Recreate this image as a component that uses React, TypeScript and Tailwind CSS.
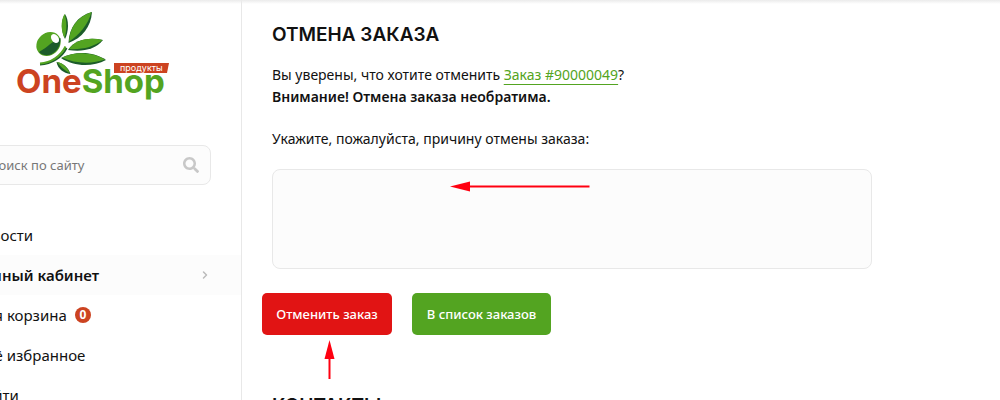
import { useState } from "react";
import { FaSearch } from "react-icons/fa";
import { ChevronRight } from "lucide-react";

type NavItem = { label: string; active?: boolean; count?: number };

const navItems: NavItem[] = [
  { label: "Новости" },
  { label: "Личный кабинет", active: true },
  { label: "Моя корзина", count: 0 },
  { label: "Моё избранное" },
  { label: "Выйти" },
];

function Logo() {
  return (
    <svg width="156" height="90" viewBox="15 11 156 90" role="img" aria-label="OneShop продукты">
      {/* Leaves: dark edge first, light blade on top */}
      <g fill="#1c5c2a">
        <path d="M65 14C60.500 21 61 31 65 39C69 31 69 20 65 14Z" />
        <path d="M92 12C77 16 69 28 68.500 43C82 38 91 27 92 12Z" />
        <path d="M103 40C90 37 75 39 68 50C82 52 95 50 103 40Z" />
        <path d="M106 60C93 51 75 51 61 58C74 67 93 67 106 60Z" />
        <path d="M56.500 62C58 69 63 73 70.500 74C68 67 63 63 56.500 62Z" />
      </g>
      <g fill="#53a421">
        <path d="M64.500 14C60.500 21 61 31 64.500 38C67 30 67 21 64.500 14Z" />
        <path d="M91.500 12C77 17 69.500 28 69 41.500C79 35 88 25 91.500 12Z" />
        <path d="M102.500 40C90 37 76 39 69 49C81 50 94 47 102.500 40Z" />
        <path d="M105 59.500C92 51.500 75 51.500 62 57.500C75 64 93 64 105 59.500Z" />
        <path d="M57 62C60 66 64 70 70 73.500C67 67 63 63 57 62Z" />
      </g>
      {/* Twig */}
      <g fill="none">
        <path d="M40 64.500C52 64 62 57 66.500 48" stroke="#1c5c2a" strokeWidth="2" />
        <path d="M40 63.500C51 63 61 56 65.500 46.500" stroke="#53a421" strokeWidth="2" />
      </g>
      {/* Olive */}
      <ellipse cx="48.500" cy="44" rx="13" ry="11" transform="rotate(-42 48.500 44)" fill="#53a421" />
      <path d="M39 52C48 47 52 41 60.500 38C61 45 57 52 51 54.500C47 56 42 55.500 39 52Z" fill="#1c5c2a" />
      <ellipse
        cx="55"
        cy="38.500"
        rx="3.500"
        ry="5"
        transform="rotate(-35 55 38.500)"
        fill="#fff"
      />
      <text x="16" y="93" className="font-['Inter',sans-serif] text-[33px] font-bold">
        <tspan fill="#cc4321">One</tspan>
        <tspan fill="#53a421">Shop</tspan>
      </text>
      <path d="M114 63H169L167 73H114Z" fill="#cc4321" />
      <text x="120" y="71" fill="#fff" className="font-['Inter',sans-serif] text-[9px]">
        продукты
      </text>
    </svg>
  );
}

function Sidebar() {
  return (
    <aside className="w-[242px] shrink-0 overflow-hidden border-r border-[#e8e8e8]">
      <div className="pl-[15px] pt-[11px]">
        <Logo />
      </div>

      {/* The panel starts beyond the left edge of the window */}
      <div className="-ml-8">
        <form className="relative mr-[30px] mt-11" onSubmit={(e) => e.preventDefault()}>
          <input
            type="text"
            aria-label="Поиск по сайту"
            placeholder="Поиск по сайту"
            className="block h-10 w-full rounded-lg border border-[#e8e8e8] bg-[#fcfcfc] pl-5 pr-10 text-[13px] placeholder:text-[#777]"
          />
          <button
            type="submit"
            aria-label="Найти"
            className="absolute inset-y-0 right-3 flex items-center text-[#c8c8c8]"
          >
            <FaSearch size={16} />
          </button>
        </form>

        <nav className="mt-[30px]">
          {navItems.map((item) => (
            <a
              key={item.label}
              href="#"
              className={
                item.active
                  ? "flex h-10 items-center bg-[#fcfcfc] pl-1 pr-[30px] text-[15px] font-semibold"
                  : "flex h-10 items-center pl-1 pr-[30px] text-[15px]"
              }
            >
              {item.label}
              {item.count !== undefined && (
                <span className="ml-2 flex size-4 items-center justify-center rounded-full bg-[#cc4321] text-[12px] font-bold text-white">
                  {item.count}
                </span>
              )}
              {item.active && (
                <ChevronRight size={12} strokeWidth={3} className="ml-auto text-[#bbb]" />
              )}
            </a>
          ))}
        </nav>
      </div>
    </aside>
  );
}

export default function App() {
  const [reason, setReason] = useState("");

  return (
    <div className="relative flex h-screen overflow-hidden bg-white font-['Noto_Sans',sans-serif] text-[#111]">
      <div className="absolute inset-x-0 top-0 h-1 bg-linear-to-b from-[#ebebeb] to-transparent" />
      <Sidebar />

      <main className="min-w-0 flex-1 px-[30px] pt-[23px]">
        <h1 className="font-['Inter',sans-serif] text-[19px] font-semibold leading-6">ОТМЕНА ЗАКАЗА</h1>

        <p className="mt-[17px] text-[14px] leading-[22px]">
          Вы уверены, что хотите отменить{" "}
          <a href="#" className="text-[#53a421] underline underline-offset-4">
            Заказ #90000049
          </a>
          ?
          <br />
          <b className="font-semibold">Внимание! Отмена заказа необратима.</b>
        </p>

        <form onSubmit={(e) => e.preventDefault()}>
          <label htmlFor="reason" className="mt-5 block text-[14px] leading-[22px]">
            Укажите, пожалуйста, причину отмены заказа:
          </label>
          <div className="relative mt-[19px] max-w-[600px]">
            <textarea
              id="reason"
              value={reason}
              onChange={(e) => setReason(e.target.value)}
              className="block h-[100px] w-full resize-none rounded-lg border border-[#e8e8e8] bg-[#fcfcfc] p-4 text-[14px]"
            />
            <svg
              width="140"
              height="12"
              viewBox="0 0 140 12"
              className="pointer-events-none absolute left-[178px] top-[11px]"
            >
              <path d="M0 6.500L20 1.500V11.500Z" fill="#ff0010" />
              <path d="M19 6.500H139.500" stroke="#ff0010" strokeWidth="2" />
            </svg>
          </div>

          <div className="-ml-[10px] mt-6 flex gap-5">
            <div className="relative">
              <button
                type="submit"
                className="h-[42px] w-[130px] whitespace-nowrap rounded-[5px] bg-[#e11414] pt-0.5 text-[13px] font-medium text-white"
              >
                Отменить заказ
              </button>
              <svg
                width="12"
                height="40"
                viewBox="0 0 12 40"
                className="pointer-events-none absolute left-[61px] top-[46px]"
              >
                <path d="M6.500 1L11.500 20H1.500Z" fill="#ff0010" />
                <path d="M6.500 19V40" stroke="#ff0010" strokeWidth="2" />
              </svg>
            </div>
            <button
              type="button"
              className="h-[42px] w-[139px] whitespace-nowrap rounded-[5px] bg-[#53a421] pt-0.5 text-[13px] font-medium text-white"
            >
              В список заказов
            </button>
          </div>
        </form>

        <h2 className="mt-[59px] font-['Inter',sans-serif] text-[19px] font-semibold leading-6">КОНТАКТЫ</h2>
      </main>
    </div>
  );
}
